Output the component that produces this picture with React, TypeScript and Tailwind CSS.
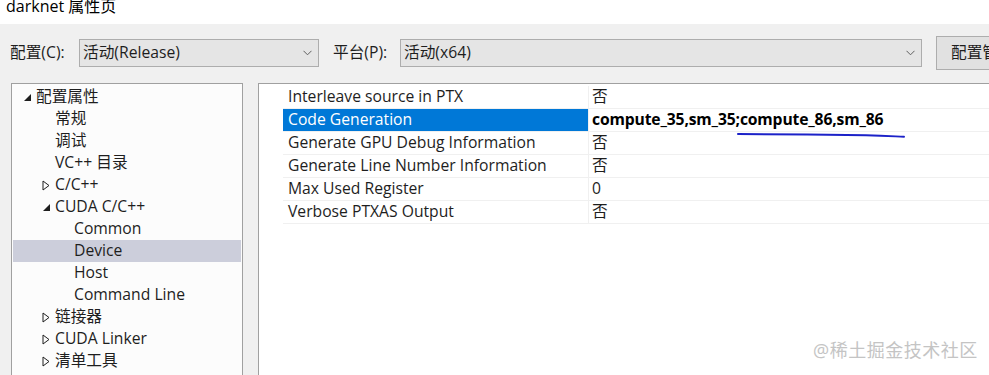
import React from "react";

type TreeItem = {
    label: string;
    level: number;
    arrow?: "open" | "closed";
    selected?: boolean;
};

const treeItems: TreeItem[] = [
    { label: "配置属性", level: 0, arrow: "open" },
    { label: "常规", level: 1 },
    { label: "调试", level: 1 },
    { label: "VC++ 目录", level: 1 },
    { label: "C/C++", level: 1, arrow: "closed" },
    { label: "CUDA C/C++", level: 1, arrow: "open" },
    { label: "Common", level: 2 },
    { label: "Device", level: 2, selected: true },
    { label: "Host", level: 2 },
    { label: "Command Line", level: 2 },
    { label: "链接器", level: 1, arrow: "closed" },
    { label: "CUDA Linker", level: 1, arrow: "closed" },
    { label: "清单工具", level: 1, arrow: "closed" },
];

const props = [
    { name: "Interleave source in PTX", value: "否" },
    { name: "Code Generation", value: "compute_35,sm_35;compute_86,sm_86", selected: true },
    { name: "Generate GPU Debug Information", value: "否" },
    { name: "Generate Line Number Information", value: "否" },
    { name: "Max Used Register", value: "0" },
    { name: "Verbose PTXAS Output", value: "否" },
];

const Chevron = () => (
    <svg width="9" height="6" viewBox="0 0 9 6" className="shrink-0">
        <path d="M0.5 0.8 L4.5 4.8 L8.5 0.8" fill="none" stroke="#606060" strokeWidth="1" />
    </svg>
);

const Arrow = ({ kind }: { kind: "open" | "closed" }) =>
    kind === "open" ? (
        <svg width="9" height="9" viewBox="0 0 9 9">
            <path d="M8 1 L8 8 L1 8 Z" fill="#1e1e1e" />
        </svg>
    ) : (
        <svg width="8" height="11" viewBox="0 0 8 11">
            <path d="M1 1 L7 5.5 L1 10 Z" fill="none" stroke="#1e1e1e" strokeWidth="1" />
        </svg>
    );

const App: React.FC = () => {
    return (
        <div
            className="relative w-[989px] h-[375px] overflow-hidden bg-[#f0f0f0] text-[15.7px] text-[#1e1e1e]"
            style={{ fontFamily: '"Open Sans", "Noto Sans CJK SC", sans-serif' }}
        >
            {/* title bar */}
            <div className="h-[24px] bg-white flex items-start pl-[6px]">
                <span className="text-[16px] leading-[16px] -mt-[2px] text-black">darknet 属性页</span>
            </div>

            {/* config row */}
            <div className="flex items-center h-[49px] pt-[8px] pl-[10px] whitespace-nowrap">
                <span className="w-[69px] shrink-0">配置(C):</span>
                <div className="w-[240px] h-[28px] shrink-0 flex items-center justify-between bg-[#e5e5e5] border border-[#adadad] pl-[3px] pr-[6px]">
                    <span>活动(Release)</span>
                    <Chevron />
                </div>
                <span className="ml-[14px] w-[67px] shrink-0">平台(P):</span>
                <div className="w-[522px] h-[28px] shrink-0 flex items-center justify-between bg-[#e5e5e5] border border-[#adadad] pl-[3px] pr-[6px]">
                    <span>活动(x64)</span>
                    <Chevron />
                </div>
                <div className="ml-[14px] w-[80px] h-[34px] shrink-0 flex items-center bg-[#e1e1e1] border border-[#adadad] pl-[14px]">
                    配置管理器...
                </div>
            </div>

            {/* panels */}
            <div className="flex mt-[10px] pl-[11px] h-[300px]">
                <div className="w-[232px] shrink-0 bg-[#fcfcfc] border border-[#a0a0a0] border-b-0 pt-[2px] pl-[1px] pr-[1px]">
                    {treeItems.map((item) => (
                        <div
                            key={item.label}
                            className={`h-[22px] flex items-center ${item.selected ? "bg-[#cccedb]" : ""}`}
                        >
                            <div
                                className={`flex items-center justify-center w-[12px] shrink-0 ${
                                    item.level === 0 ? "ml-[8px]" : item.level === 1 ? "ml-[27px]" : "ml-[46px]"
                                }`}
                            >
                                {item.arrow && <Arrow kind={item.arrow} />}
                            </div>
                            <span className="ml-[3px] whitespace-nowrap">{item.label}</span>
                        </div>
                    ))}
                </div>

                <div className="ml-[15px] flex-1 bg-white border-l border-t border-[#a0a0a0] pt-[2px] pl-[24px]">
                    {props.map((p) => (
                        <div key={p.name} className="flex h-[23px]">
                            <div
                                className={`w-[305px] shrink-0 flex items-center pl-[5px] border-b border-[#f0f0f0] ${
                                    p.selected ? "bg-[#0078d7] text-white border-[#0078d7]" : ""
                                }`}
                            >
                                {p.name}
                            </div>
                            <div
                                className={`flex-1 flex items-center pl-[3px] border-b border-l border-[#f0f0f0] whitespace-nowrap ${
                                    p.selected ? "font-bold text-black tracking-[-0.15px]" : ""
                                }`}
                            >
                                {p.value}
                            </div>
                        </div>
                    ))}
                </div>
            </div>

            {/* hand drawn underline */}
            <svg className="absolute left-[736px] top-[131px]" width="172" height="10" viewBox="0 0 172 10">
                <path
                    d="M2 3 C 40 3.5, 90 3.6, 130 4.2 C 150 4.6, 160 5.5, 168 5.8"
                    fill="none"
                    stroke="#1c22c8"
                    strokeWidth="2"
                    strokeLinecap="round"
                />
            </svg>

            {/* watermark */}
            <div className="absolute left-[813px] top-[338px] text-[18px] leading-[24px] text-[#c4c4c4] tracking-[0.5px]">
                @稀土掘金技术社区
            </div>
        </div>
    );
};

export default App;
